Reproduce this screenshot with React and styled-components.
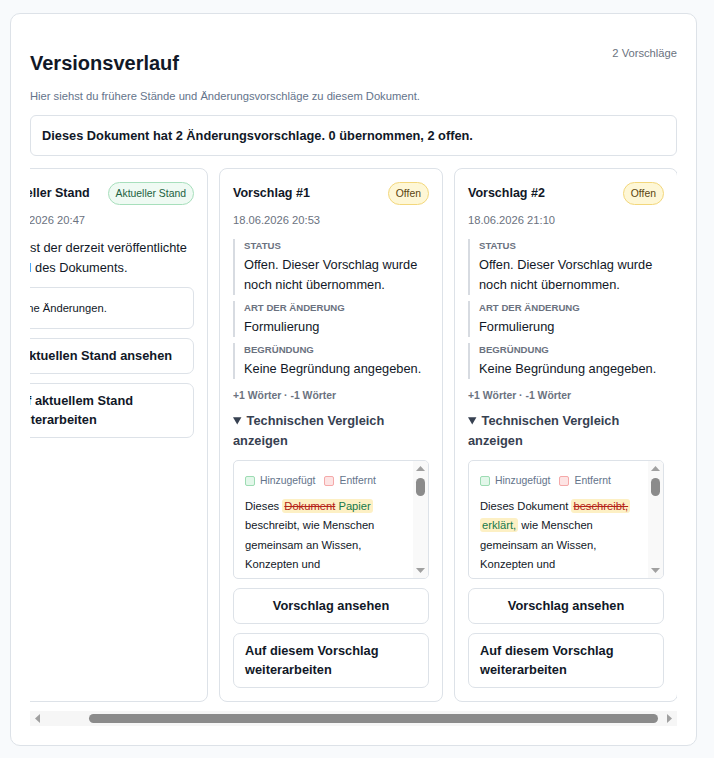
import React, { useLayoutEffect, useRef, useState } from "react";
import styled, { createGlobalStyle, css } from "styled-components";

const GlobalStyle = createGlobalStyle`
  * { box-sizing: border-box; }
  html, body { margin: 0; padding: 0; background: #f8fafc; }
  body { font-family: "Liberation Sans", Arial, sans-serif; color: #111827; }
`;

const FONT = `"Liberation Sans", Arial, sans-serif`;

const hiddenNativeScrollbar = css`
  scrollbar-width: none;
  &::-webkit-scrollbar {
    display: none;
  }
`;

/* ---------- custom scrollbar ---------- */

const RailBox = styled.div`
  display: flex;
  flex-direction: ${(p) => (p.$axis === "x" ? "row" : "column")};
  flex: 0 0 15px;
  ${(p) => (p.$axis === "x" ? "height: 15px;" : "width: 15px;")}
  background: ${(p) => (p.$axis === "x" ? "#f6f6f6" : "#f9f9f9")};
`;

const RailButton = styled.span`
  flex: 0 0 15px;
  display: flex;
  align-items: center;
  justify-content: center;
  color: #a0a0a0;
`;

const RailTrack = styled.span`
  flex: 1 1 0;
  display: flex;
  flex-direction: ${(p) => (p.$axis === "x" ? "row" : "column")};
  min-width: 0;
  min-height: 0;
`;

const RailGap = styled.span`
  flex: 0 1 0;
`;

const RailThumb = styled.span`
  flex: 1 1 0;
  margin: ${(p) => (p.$axis === "x" ? "3px 3px" : "2px 3px")};
  border-radius: 6px;
  background: #8b8b8b;
  ${(p) => (p.$axis === "x" ? "min-width: 18px;" : "min-height: 16px;")}
`;

function Arrow({ dir }) {
  const pts = {
    left: "5,0 0,4.5 5,9",
    right: "0,0 5,4.5 0,9",
    up: "0,5 4.5,0 9,5",
    down: "0,0 4.5,5 9,0",
  }[dir];
  const horizontal = dir === "left" || dir === "right";
  return (
    <svg width={horizontal ? 5 : 9} height={horizontal ? 9 : 5} viewBox={horizontal ? "0 0 5 9" : "0 0 9 5"}>
      <polygon points={pts} fill="currentColor" />
    </svg>
  );
}

function Rail({ axis, ratio, pos }) {
  const free = Math.max(0, 1 - ratio);
  return (
    <RailBox $axis={axis}>
      <RailButton>
        <Arrow dir={axis === "x" ? "left" : "up"} />
      </RailButton>
      <RailTrack $axis={axis}>
        <RailGap style={{ flexGrow: free * pos }} />
        <RailThumb $axis={axis} style={{ flexGrow: ratio }} />
        <RailGap style={{ flexGrow: free * (1 - pos) }} />
      </RailTrack>
      <RailButton>
        <Arrow dir={axis === "x" ? "right" : "down"} />
      </RailButton>
    </RailBox>
  );
}

function useScrollMetrics(axis, toEnd) {
  const ref = useRef(null);
  const [m, setM] = useState({ ratio: 1, pos: 0 });
  useLayoutEffect(() => {
    const el = ref.current;
    if (!el) return undefined;
    if (toEnd) el.scrollLeft = Math.max(0, el.scrollWidth - el.clientWidth - 1);
    const update = () => {
      const size = axis === "x" ? el.clientWidth : el.clientHeight;
      const total = axis === "x" ? el.scrollWidth : el.scrollHeight;
      const off = axis === "x" ? el.scrollLeft : el.scrollTop;
      const max = total - size;
      setM({ ratio: total ? size / total : 1, pos: max > 0 ? off / max : 0 });
    };
    update();
    el.addEventListener("scroll", update);
    return () => el.removeEventListener("scroll", update);
  }, [axis, toEnd]);
  return [ref, m];
}

/* ---------- page ---------- */

const Page = styled.div`
  padding: 13px 17px 13px 10px;
`;

const Panel = styled.section`
  background: #fff;
  border: 1px solid #dde2e8;
  border-radius: 10px;
  padding: 31px 19px 19px;
`;

const HeaderRow = styled.div`
  display: flex;
  justify-content: space-between;
  align-items: flex-start;
`;

const Title = styled.h1`
  margin: 6px 0 0;
  font-size: 20px;
  line-height: 24px;
  font-weight: 700;
  color: #111827;
`;

const Meta = styled.span`
  font-size: 11.2px;
  line-height: 16px;
  color: #6b7280;
`;

const Subtitle = styled.p`
  margin: 13px 0 0;
  font-size: 11.2px;
  line-height: 16px;
  color: #64748b;
`;

const Summary = styled.div`
  margin-top: 11px;
  border: 1px solid #dde2e8;
  border-radius: 6px;
  padding: 11px;
  font-size: 12.8px;
  line-height: 17px;
  font-weight: 700;
  color: #111827;
`;

const ScrollArea = styled.div`
  margin-top: 12px;
  display: flex;
  flex-direction: column;
`;

const Scroller = styled.div`
  display: flex;
  gap: 11px;
  overflow-x: auto;
  padding-bottom: 9px;
  ${hiddenNativeScrollbar}
`;

const Card = styled.article`
  flex: 0 0 224px;
  display: flex;
  flex-direction: column;
  background: #fff;
  border: 1px solid #dde2e8;
  border-radius: 8px;
  padding: 13px;
`;

const CardHead = styled.div`
  display: flex;
  justify-content: space-between;
  align-items: center;
  min-height: 23px;
`;

const CardTitle = styled.h2`
  margin: 0;
  font-size: 12.5px;
  line-height: 17px;
  font-weight: 700;
  color: #111827;
  white-space: nowrap;
`;

const tones = {
  green: css`
    background: #effaf3;
    border-color: #a7dfbc;
    color: #21613f;
  `,
  amber: css`
    background: #fef7d6;
    border-color: #f3d77c;
    color: #5b4510;
  `,
};

const Badge = styled.span`
  display: inline-flex;
  align-items: center;
  font-size: 10.4px;
  line-height: 13px;
  padding: 4px 7px;
  border-radius: 999px;
  border: 1px solid;
  white-space: nowrap;
  ${(p) => tones[p.$tone]}
`;

const DateLine = styled.div`
  margin-top: 8px;
  font-size: 11.2px;
  line-height: 14px;
  color: #6b7280;
`;

const Field = styled.div`
  margin-top: ${(p) => (p.$first ? "12px" : "6px")};
  border-left: 2px solid #d7dbe1;
  padding-left: 9px;
`;

const FieldLabel = styled.div`
  font-size: 9.6px;
  line-height: 13px;
  font-weight: 700;
  text-transform: uppercase;
  color: #6b7280;
`;

const FieldValue = styled.div`
  margin-top: 3px;
  font-size: 12.8px;
  line-height: 20px;
  color: #111827;
`;

const Stats = styled.div`
  margin-top: 10px;
  font-size: 10.4px;
  line-height: 13px;
  font-weight: 700;
  color: #6b7280;
`;

const Toggle = styled.details`
  margin-top: 9px;
`;

const ToggleSummary = styled.summary`
  font-size: 12.8px;
  line-height: 20px;
  font-weight: 700;
  color: #374151;
  cursor: pointer;
`;

const DiffFrame = styled.div`
  margin-top: 9px;
  height: 119px;
  display: flex;
  overflow: hidden;
  border: 1px solid #dde2e8;
  border-radius: 5px;
`;

const DiffScroll = styled.div`
  flex: 1 1 0;
  min-width: 0;
  overflow-y: auto;
  padding: 12px 11px 10px;
  ${hiddenNativeScrollbar}
`;

const Legend = styled.div`
  display: flex;
  align-items: center;
  gap: 9px;
  font-size: 10.4px;
  line-height: 16px;
  color: #64748b;
`;

const LegendItem = styled.span`
  display: inline-flex;
  align-items: center;
  gap: 5px;
`;

const Swatch = styled.span`
  width: 10px;
  height: 10px;
  border-radius: 2px;
  border: 1px solid ${(p) => (p.$kind === "add" ? "#9ddcb3" : "#f5a9a9")};
  background: ${(p) => (p.$kind === "add" ? "#e3f7ea" : "#fde4e4")};
`;

const DiffText = styled.p`
  margin: 8px 0 0;
  font-size: 11.2px;
  line-height: 19.3px;
  color: #111827;
`;

const Change = styled.span`
  background: #fdf0c4;
  border-radius: 3px;
  padding: 1px 2px;
  -webkit-box-decoration-break: clone;
  box-decoration-break: clone;
`;

const Del = styled.del`
  color: #b42318;
  text-decoration: line-through;
`;

const Ins = styled.ins`
  color: #17784a;
  text-decoration: none;
`;

const BodyText = styled.p`
  margin: 11px 0 0;
  font-size: 12.8px;
  line-height: 20px;
  color: #111827;
`;

const Link = styled.span`
  color: #2563eb;
`;

const NoteBox = styled.div`
  margin-top: 9px;
  border: 1px solid #dde2e8;
  border-radius: 6px;
  padding: 11px 12px;
  font-size: 11.2px;
  line-height: 18px;
  color: #111827;
`;

const ActionButton = styled.button`
  margin-top: 9px;
  width: 100%;
  background: #fff;
  border: 1px solid #dde2e8;
  border-radius: 7px;
  padding: 7px 11px;
  font-family: ${FONT};
  font-size: 12.8px;
  line-height: 19.5px;
  font-weight: 700;
  color: #111827;
  text-align: ${(p) => (p.$left ? "left" : "center")};
  cursor: pointer;
`;

const REST =
  " Entscheidungen zusammenarbeiten. Jeder Beitrag wird als Vorschlag festgehalten, damit andere ihn lesen, kommentieren und übernehmen können. Frühere Stände bleiben erhalten, sodass jederzeit nachvollziehbar ist, wer was geändert hat und warum. So entsteht mit der Zeit ein gemeinsames Verständnis, das offen für neue Perspektiven bleibt und sich Schritt für Schritt weiterentwickelt. Das Dokument dient als Grundlage für Diskussionen und wird regelmäßig überarbeitet, sobald sich neue Erkenntnisse ergeben. Hinweise und Ergänzungen sind jederzeit willkommen.";

function Diff({ children }) {
  const [ref, m] = useScrollMetrics("y", false);
  return (
    <DiffFrame>
      <DiffScroll ref={ref}>
        <Legend>
          <LegendItem>
            <Swatch $kind="add" />
            Hinzugefügt
          </LegendItem>
          <LegendItem>
            <Swatch $kind="del" />
            Entfernt
          </LegendItem>
        </Legend>
        <DiffText>{children}</DiffText>
      </DiffScroll>
      <Rail axis="y" ratio={m.ratio} pos={m.pos} />
    </DiffFrame>
  );
}

function ProposalCard({ title, date, diff }) {
  return (
    <Card>
      <CardHead>
        <CardTitle>{title}</CardTitle>
        <Badge $tone="amber">Offen</Badge>
      </CardHead>
      <DateLine>{date}</DateLine>
      <Field $first>
        <FieldLabel>Status</FieldLabel>
        <FieldValue>Offen. Dieser Vorschlag wurde noch nicht übernommen.</FieldValue>
      </Field>
      <Field>
        <FieldLabel>Art der Änderung</FieldLabel>
        <FieldValue>Formulierung</FieldValue>
      </Field>
      <Field>
        <FieldLabel>Begründung</FieldLabel>
        <FieldValue>Keine Begründung angegeben.</FieldValue>
      </Field>
      <Stats>+1 Wörter · -1 Wörter</Stats>
      <Toggle open>
        <ToggleSummary>Technischen Vergleich anzeigen</ToggleSummary>
        <Diff>{diff}</Diff>
      </Toggle>
      <ActionButton>Vorschlag ansehen</ActionButton>
      <ActionButton $left>Auf diesem Vorschlag weiterarbeiten</ActionButton>
    </Card>
  );
}

export default function App() {
  const [scrollRef, hm] = useScrollMetrics("x", true);

  return (
    <>
      <GlobalStyle />
      <Page>
        <Panel>
          <HeaderRow>
            <Title>Versionsverlauf</Title>
            <Meta>2 Vorschläge</Meta>
          </HeaderRow>
          <Subtitle>Hier siehst du frühere Stände und Änderungsvorschläge zu diesem Dokument.</Subtitle>
          <Summary>Dieses Dokument hat 2 Änderungsvorschlage. 0 übernommen, 2 offen.</Summary>
          <ScrollArea>
            <Scroller ref={scrollRef}>
              <Card>
                <CardHead>
                  <CardTitle>Aktueller Stand</CardTitle>
                  <Badge $tone="green">Aktueller Stand</Badge>
                </CardHead>
                <DateLine>18.06.2026 20:47</DateLine>
                <BodyText>
                  Dies ist der derzeit veröffentlichte <Link>Stand</Link> des Dokuments.
                </BodyText>
                <NoteBox>Keine Änderungen.</NoteBox>
                <ActionButton>Aktuellen Stand ansehen</ActionButton>
                <ActionButton $left>Auf aktuellem Stand weiterarbeiten</ActionButton>
              </Card>
              <ProposalCard
                title="Vorschlag #1"
                date="18.06.2026 20:53"
                diff={
                  <>
                    Dieses{" "}
                    <Change>
                      <Del>Dokument</Del> <Ins>Papier</Ins>
                    </Change>{" "}
                    beschreibt, wie Menschen gemeinsam an Wissen, Konzepten und{REST}
                  </>
                }
              />
              <ProposalCard
                title="Vorschlag #2"
                date="18.06.2026 21:10"
                diff={
                  <>
                    Dieses Dokument{" "}
                    <Change>
                      <Del>beschreibt,</Del> <Ins>erklärt,</Ins>
                    </Change>{" "}
                    wie Menschen gemeinsam an Wissen, Konzepten und{REST}
                  </>
                }
              />
            </Scroller>
            <Rail axis="x" ratio={hm.ratio} pos={hm.pos} />
          </ScrollArea>
        </Panel>
      </Page>
    </>
  );
}
